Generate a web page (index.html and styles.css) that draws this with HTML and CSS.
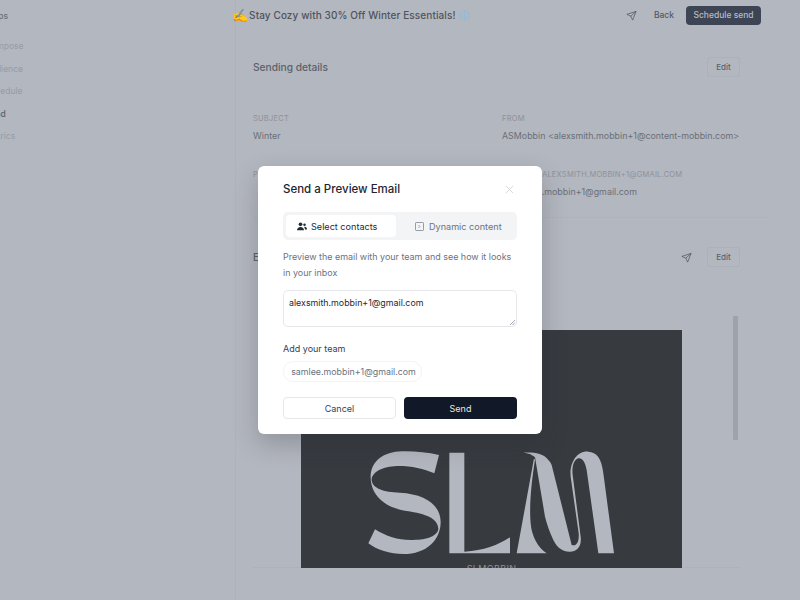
FILE: index.html
```html
<!DOCTYPE html>
<html lang="en">
<head>
    <meta charset="UTF-8">
    <meta name="viewport" content="width=device-width, initial-scale=1.0">
    <title>Send a Preview Email</title>
    <link rel="stylesheet" href="styles.css">
</head>
<body>
    <div class="page">
        <aside class="sidebar">
            <div class="steps-title">Steps</div>
            <ul class="steps">
                <li>Compose</li>
                <li>Audience</li>
                <li>Schedule</li>
                <li class="current">Send</li>
                <li>Metrics</li>
            </ul>
        </aside>
        <div class="content">
            <header class="topbar">
                <div class="campaign">
                    <span class="emoji-hand">✍</span>
                    <span>Stay Cozy with 30% Off Winter Essentials!</span>
                    <svg class="snow" viewBox="0 0 12 12"><circle cx="6" cy="6" r="5"/><path d="M6 .5v11M1.200 3.200l9.600 5.600M10.800 3.200 1.200 8.800"/></svg>
                </div>
                <div class="topbar-actions">
                    <svg class="send-icon" viewBox="0 0 24 24"><path d="M22 3 2 9.500l8.500 4 4 8.500zM10.500 13.500 22 3"/></svg>
                    <span class="back">Back</span>
                    <button class="schedule">Schedule send</button>
                </div>
            </header>
            <main class="main">
                <section class="details">
                    <div class="section-head">
                        <h2>Sending details</h2>
                        <button class="edit">Edit</button>
                    </div>
                    <div class="fields">
                        <div>
                            <div class="field-label">Subject</div>
                            <div class="field-value">Winter</div>
                        </div>
                        <div>
                            <div class="field-label">From</div>
                            <div class="field-value">ASMobbin &lt;alexsmith.mobbin+1@content-mobbin.com&gt;</div>
                        </div>
                        <div>
                            <div class="field-label">Preview</div>
                        </div>
                        <div>
                            <div class="field-label"><span class="field-prefix">Reply to</span>alexsmith.mobbin+1@gmail.com</div>
                            <div class="field-value">alexsmith.mobbin+1@gmail.com</div>
                        </div>
                    </div>
                </section>
                <section class="email">
                    <div class="section-head email-head">
                        <h2>Email</h2>
                        <div class="email-actions">
                            <svg class="send-icon" viewBox="0 0 24 24"><path d="M22 3 2 9.500l8.500 4 4 8.500zM10.500 13.500 22 3"/></svg>
                            <button class="edit">Edit</button>
                        </div>
                    </div>
                    <div class="email-preview">
                        <div class="email-image">
                            <svg class="logo" viewBox="213 -300 1143 714">
                                <path d="M627 75C590 66 550 63 515 64C460 65 420 95 422 145C424 200 470 235 530 243C590 252 622 265 625 295C625 318 590 330 550 330C510 332 470 320 435 298L415 340C440 360 480 372 520 372C590 372 632 330 632 275C630 220 580 192 510 188C460 187 427 175 425 150C425 125 460 110 500 108C540 107 580 115 613 130Z"/>
                                <path d="M658 68H703V365C760 362 805 345 840 322V370H658Z"/>
                                <path d="M860 370 912 85 915 90C905 150 897 230 902 280C905 320 925 355 950 370Z"/>
                                <path d="M880 68C905 66 940 68 955 90C960 95 963 100 965 105L1025 345C1040 350 1048 335 1046 310L1022 140C1018 100 1040 62 1075 65C1100 66 1115 85 1120 130L1152 370H1105L1070 120C1066 95 1055 82 1045 85C1032 88 1025 110 1028 135L1052 320C1056 350 1040 365 1020 365C1000 366 982 355 970 330C958 305 950 280 945 260L915 82C905 72 895 70 880 68Z"/>
                            </svg>
                            <div class="logo-name">SLMOBBIN</div>
                        </div>
                        <div class="scrollbar"></div>
                    </div>
                </section>
            </main>
        </div>
    </div>

    <div class="modal">
        <div class="modal-head">
            <h3>Send a Preview Email</h3>
            <svg class="close" viewBox="0 0 10 10"><path d="M1 1l8 8M9 1l-8 8"/></svg>
        </div>
        <div class="tabs">
            <div class="tab active">
                <svg class="tab-icon" viewBox="0 0 12 10"><circle cx="4.200" cy="2.400" r="2.200"/><path d="M0 9.500C0 7 1.800 5.500 4.200 5.500S8.400 7 8.400 9.500z"/><circle cx="9" cy="3" r="1.500"/><path d="M9.300 5.300c1.700 0 2.700 1.300 2.700 3.200H9.500C9.500 7.200 9.200 6.100 8.400 5.500z"/></svg>
                Select contacts
            </div>
            <div class="tab">
                <svg class="tab-icon-outline" viewBox="0 0 10 10"><rect x="0.500" y="0.500" width="9" height="9" rx="1"/><path d="M4 3.500 5.500 5 4 6.500"/></svg>
                Dynamic content
            </div>
        </div>
        <p class="hint">Preview the email with your team and see how it looks in your inbox</p>
        <div class="recipients">alexsmith.mobbin+1@gmail.com
            <svg class="grip" viewBox="0 0 6 6"><path d="M0 6 6 0M3 6l3-3"/></svg>
        </div>
        <div class="team-label">Add your team</div>
        <div class="chip">samlee.mobbin+1@gmail.com</div>
        <div class="modal-actions">
            <button class="cancel">Cancel</button>
            <button class="send">Send</button>
        </div>
    </div>
</body>
</html>
```

FILE: styles.css
```css
* {
    box-sizing: border-box;
}
body {
    margin: 0;
    height: 600px;
    overflow: hidden;
    font-family: 'Inter', sans-serif;
    background: #b3b7bf;
    color: #5c616c;
    position: relative;
}
button {
    font-family: inherit;
    cursor: pointer;
}
h2, h3, p {
    margin: 0;
    font-weight: 500;
}
.page {
    display: flex;
    height: 600px;
}
.sidebar {
    width: 251px;
    flex-shrink: 0;
    margin-left: -15px;
    padding-top: 9px;
    font-size: 8.500px;
    color: #989ca3;
    border-right: 1px solid #aeb2ba;
}
.steps-title {
    font-weight: 500;
    color: #6b7079;
    line-height: 14px;
}
.steps {
    list-style: none;
    margin: 16px 0 0;
    padding: 0;
}
.steps li {
    height: 22.500px;
    line-height: 14px;
}
.steps .current {
    color: #5c616c;
    font-weight: 500;
}
.content {
    flex: 1;
    min-width: 0;
}
.topbar {
    height: 30px;
    display: flex;
    align-items: center;
    justify-content: space-between;
    padding-right: 39px;
}
.campaign {
    display: flex;
    align-items: center;
    gap: 1px;
    margin-left: -4px;
    font-size: 10px;
    font-weight: 500;
    letter-spacing: 0.010em;
    color: #4f545e;
}
.emoji-hand {
    color: #a98a55;
    font-size: 13px;
}
.snow {
    width: 11px;
    height: 11px;
    margin-left: 2px;
    fill: #a8bdcb;
    stroke: #9db8ca;
    stroke-width: 1;
}
.topbar-actions {
    display: flex;
    align-items: center;
}
.topbar-actions .send-icon {
    margin-right: 17px;
}
.send-icon {
    width: 11px;
    height: 11px;
    fill: none;
    stroke: #4f545e;
    stroke-width: 1.600;
    stroke-linejoin: round;
}
.back {
    font-size: 8.500px;
    font-weight: 500;
    color: #555a64;
    margin-right: 12px;
}
.schedule {
    height: 19px;
    width: 75px;
    padding: 0;
    border: none;
    border-radius: 4px;
    background: #3d4454;
    color: #b8bcc4;
    font-size: 8.500px;
    font-weight: 500;
}
.main {
    padding: 0 60px 0 17px;
}
.section-head {
    display: flex;
    align-items: center;
    justify-content: space-between;
}
.details {
    padding-top: 27px;
    height: 188px;
    border-bottom: 1px solid #aeb2ba;
    margin-right: -29px;
    padding-right: 29px;
}
h2 {
    font-size: 10.200px;
    color: #5c616c;
}
.edit {
    width: 33px;
    height: 20px;
    padding: 0;
    background: #b3b7bf;
    border: 1px solid #acb0b8;
    border-radius: 3px;
    color: #5c616c;
    font-size: 8px;
    font-weight: 500;
}
.fields {
    display: grid;
    grid-template-columns: 249px 1fr;
    grid-template-rows: 29px 29px;
    row-gap: 27px;
    margin-top: 36px;
}
.field-label {
    font-size: 7.500px;
    letter-spacing: 0.030em;
    text-transform: uppercase;
    color: #8e929a;
    line-height: 12px;
    white-space: nowrap;
}
.field-prefix {
    display: inline-block;
    width: 40px;
}
.field-value {
    font-size: 8.900px;
    color: #6a6f78;
    line-height: 12px;
    margin-top: 5px;
    white-space: nowrap;
}
.email {
    padding-top: 29px;
}
.email-actions {
    display: flex;
    align-items: center;
    gap: 15px;
}
.email-preview {
    margin-top: 48px;
    height: 253px;
    display: flex;
    border-bottom: 1px solid #aeb2ba;
}
.email-image {
    width: 381px;
    height: 238px;
    margin: 15px 0 0 48px;
    background: #373a3f;
    overflow: hidden;
}
.logo {
    display: block;
    width: 381px;
    height: 238px;
    fill: #b3b7bf;
}
.logo-name {
    font-size: 9px;
    text-align: center;
    letter-spacing: 0.040em;
    color: #8e929a;
    margin-top: -5px;
}
.scrollbar {
    width: 5px;
    height: 124px;
    margin: 1px 0 0 51px;
    background: #9ea2aa;
    border-radius: 1px;
}
/* dialog sits over the dimmed page */
.modal {
    position: absolute;
    left: 258px;
    top: 166px;
    width: 284px;
    height: 268px;
    padding: 15px 25px 0;
    background: #fff;
    border-radius: 6px;
    box-shadow: 0 10px 25px rgba(40, 45, 55, 0.25);
}
.modal-head {
    display: flex;
    align-items: center;
    justify-content: space-between;
    height: 16px;
}
h3 {
    font-size: 11.500px;
    color: #1f2430;
}
.close {
    width: 9px;
    height: 9px;
    margin-right: 3px;
    fill: none;
    stroke: #d3d6da;
    stroke-width: 1;
}
.tabs {
    display: flex;
    height: 28px;
    margin-top: 15px;
    padding: 3px;
    background: #f3f4f6;
    border-radius: 5px;
    font-size: 9.100px;
    font-weight: 400;
    color: #6b7280;
}
.tab {
    flex: 1;
    display: flex;
    align-items: center;
    gap: 5px;
    padding-left: 19px;
    border-radius: 4px;
}
.tab.active {
    flex: 0 0 110px;
    gap: 4px;
    padding-left: 11px;
    background: #fff;
    color: #1f2937;
}
.tab-icon {
    width: 10px;
    height: 9px;
    fill: #1f2937;
}
.tab-icon-outline {
    width: 9px;
    height: 9px;
    fill: none;
    stroke: #6b7280;
    stroke-width: 0.800;
}
.hint {
    margin-top: 9px;
    font-size: 8.950px;
    font-weight: 400;
    line-height: 15.500px;
    color: #6b7280;
}
.recipients {
    position: relative;
    height: 37px;
    margin-top: 10px;
    padding: 6px 5px;
    border: 1px solid #e5e7eb;
    border-radius: 5px;
    font-size: 8.850px;
    line-height: 12px;
    color: #1f2937;
}
.grip {
    position: absolute;
    right: 1px;
    bottom: 1px;
    width: 5px;
    height: 5px;
    fill: none;
    stroke: #6b7280;
    stroke-width: 0.700;
}
.team-label {
    margin-top: 16px;
    font-size: 9px;
    font-weight: 400;
    line-height: 12px;
    color: #374151;
}
.chip {
    width: 139px;
    height: 21px;
    margin-top: 6px;
    padding-left: 2px;
    border: 1px solid #f3f4f6;
    border-radius: 10px;
    font-size: 8.850px;
    line-height: 19px;
    text-align: center;
    color: #6b7280;
}
.modal-actions {
    display: flex;
    justify-content: space-between;
    margin-top: 15px;
}
.modal-actions button {
    width: 113px;
    height: 22px;
    padding: 0;
    border-radius: 4px;
    font-size: 9px;
    font-weight: 400;
}
.cancel {
    background: #fff;
    border: 1px solid #e5e7eb;
    color: #374151;
}
.send {
    background: #111827;
    border: none;
    color: #e5e7eb;
}
```
